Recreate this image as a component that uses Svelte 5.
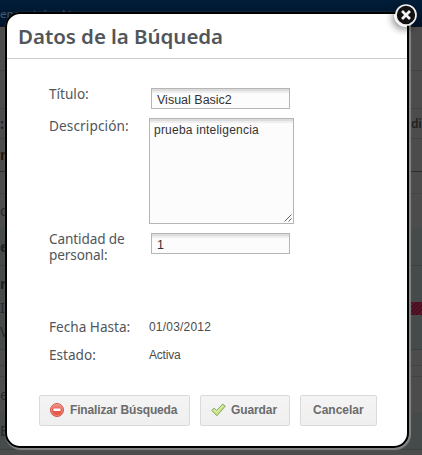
<script>
  let title = $state('Visual Basic2');
  let description = $state('prueba inteligencia');
  let amount = $state('1');

  const rows = [
    { h: 44, line: '#424242' },
    { h: 38, line: '#434343' },
    { h: 30, line: '#434343', left: ':', color: '#17233c', bold: true, right: 'di' },
    { h: 33, line: '#2c2c2c', left: 'm', color: '#2c1608', bold: true },
    { h: 22, line: '#454545' },
    { h: 34, line: '#4a4a4a', left: 'c', color: '#292929' },
    { h: 38, line: '#3c4241', bg: '#444b4a', left: 'e', color: '#1d2222', bold: true },
    { h: 36, line: '#444b4a', bg: '#444b4a', left: 'r', color: '#1d2222', bold: true },
    { h: 13, bg: '#444b4a', left: 'In', color: '#252a30', flag: true },
    { h: 35, line: '#3c4241', bg: '#444b4a', left: 'V', color: '#252a30' },
    { h: 16, line: '#434343' },
    { h: 11, line: '#434343' },
    { h: 36, line: '#4a4a4a', left: 'e', color: '#292929' },
    { h: 37, line: '#3c4241', bg: '#444b4a', left: 'E', color: '#292929' },
    { h: 8 }
  ];
</script>

<div class="page">
  <div class="topbar"><span>encontrás el tuyo</span></div>
  {#each rows as row}
    <div
      class="row"
      class:bold={row.bold}
      style:height="{row.h}px"
      style:background={row.bg}
      style:border-bottom-color={row.line}
      style:color={row.color}
    >
      <span class="edge">{row.left ?? ''}</span>
      {#if row.flag}<i class="flag"></i>{/if}
      {#if row.right}<span class="right">{row.right}</span>{/if}
    </div>
  {/each}

  <section class="dialog">
    <h2>Datos de la Búqueda</h2>
    <form onsubmit={(e) => e.preventDefault()}>
      <div class="field first">
        <label for="title">Título:</label>
        <input id="title" bind:value={title} />
      </div>
      <div class="field desc">
        <label for="description">Descripción:</label>
        <div class="area">
          <textarea id="description" bind:value={description}></textarea>
          <svg class="grip" width="8" height="8" viewBox="0 0 8 8">
            <path d="M.5 7.5l7-7M4.5 7.5l3-3" stroke="#555" stroke-width=".9" fill="none" />
          </svg>
        </div>
      </div>
      <div class="field qty">
        <label for="amount">Cantidad de personal:</label>
        <input id="amount" bind:value={amount} />
      </div>
      <div class="field date"><label for="date">Fecha Hasta:</label><output id="date">01/03/2012</output></div>
      <div class="field state"><label for="state">Estado:</label><output id="state">Activa</output></div>
      <div class="buttons">
        <button class="finish">
          <svg width="14" height="14" viewBox="0 0 14 14">
            <defs>
              <linearGradient id="red" x2="0" y2="1">
                <stop offset="0" stop-color="#f09a8b" />
                <stop offset=".5" stop-color="#e6604f" />
                <stop offset="1" stop-color="#e4503f" />
              </linearGradient>
            </defs>
            <circle cx="7" cy="7" r="6.5" fill="url(#red)" stroke="#d4594c" />
            <circle cx="7" cy="7" r="5.5" fill="none" stroke="#f19a8d" stroke-width=".7" />
            <rect x="3.5" y="5.5" width="7" height="2.6" rx=".5" fill="#fff" />
          </svg>
          <span>Finalizar Búsqueda</span>
        </button>
        <button class="save">
          <svg width="15" height="14" viewBox="0 0 15 14">
            <path d="M.7 7.4L3 5.2l2.7 2.3L11.8 1l2.5 2.2L5.9 12.8z" fill="#c5e57c" stroke="#8aa673" stroke-width="1" />
            <path d="M2.2 7.4L3 6.6l2.8 2.5 6-6.6" fill="none" stroke="#e9f6c4" stroke-width=".9" />
          </svg>
          <span>Guardar</span>
        </button>
        <button class="cancel"><span>Cancelar</span></button>
      </div>
    </form>
  </section>

  <button class="close" aria-label="Cerrar">
    <svg width="24" height="24" viewBox="0 0 24 24">
      <circle cx="12" cy="12" r="10" fill="#111" stroke="#f0f0f0" stroke-width="1.7" />
      <path d="M9 9l6 6M15 9l-6 6" stroke="#f4f4f4" stroke-width="2.7" stroke-linecap="square" />
    </svg>
  </button>
</div>

<style>
  .page {
    position: relative;
    width: 422px;
    height: 455px;
    overflow: hidden;
    background: #4c4c4c;
    font-family: 'Liberation Sans', Arial, sans-serif;
  }
  .topbar {
    box-sizing: border-box;
    height: 27px;
    padding-top: 7px;
    background: linear-gradient(#001d38, #00152b);
    border-bottom: 1px solid #101418;
    color: #48586a;
    font: 11px/13px 'Noto Sans', sans-serif;
    letter-spacing: -0.35px;
    white-space: nowrap;
  }
  .topbar span { font-size: 11.5px; letter-spacing: -0.1px; }
  .row {
    box-sizing: border-box;
    display: flex;
    align-items: center;
    border-bottom: 1px solid transparent;
    font: 14px/14px 'Noto Sans', sans-serif;
  }
  .row.bold { font-weight: 700; }
  .edge { width: 6px; }
  .right {
    margin-left: auto;
    width: 11px;
    font-size: 12px;
    font-weight: 600;
    letter-spacing: -0.3px;
    color: #202020;
  }
  .flag {
    margin-left: auto;
    width: 11px;
    height: 13px;
    background: repeating-linear-gradient(135deg, #4c0f22 0 2px, #591a2d 2px 3px);
  }
  .dialog {
    position: absolute;
    left: 5px;
    top: 12px;
    box-sizing: border-box;
    width: 404px;
    height: 436px;
    border: 2px solid #000;
    border-radius: 15px;
    background: #fff;
    box-shadow: 1px 1px 1px 1px #858585;
  }
  h2 {
    box-sizing: border-box;
    margin: 0;
    height: 45px;
    padding: 8px 0 0 11px;
    border-bottom: 1px solid #ccc;
    color: #50565a;
    font: 600 20.5px/28px 'Noto Sans', sans-serif;
    letter-spacing: -0.05px;
    white-space: nowrap;
  }
  form {
    display: flex;
    flex-direction: column;
    padding-left: 42px;
  }
  .field {
    display: flex;
    align-items: flex-start;
  }
  label {
    box-sizing: border-box;
    width: 100px;
    padding-right: 10px;
    flex: none;
    color: #50565a;
    font: 13.6px/16px 'Noto Sans', sans-serif;
  }
  .desc label { letter-spacing: 0.12px; }
  .qty label { letter-spacing: -0.12px; }
  output {
    color: #4b4b4b;
    font-size: 12px;
    line-height: 16px;
    letter-spacing: 0.2px;
  }
  input, textarea {
    box-sizing: border-box;
    border: 1px solid #b5b5b5;
    border-radius: 0;
    background: linear-gradient(#dcdcdc 0 2px, #eee 2px 4px, #fcfcfc 4px);
    color: #333;
    font: 12.5px/15px 'Liberation Sans', Arial, sans-serif;
    outline: none;
  }
  input {
    width: 139px;
    height: 21px;
    margin: 2px 0 0 2px;
    padding: 2px 5px 0;
  }
  .area {
    position: relative;
    width: 145px;
    height: 106px;
  }
  textarea {
    display: block;
    width: 145px;
    height: 106px;
    margin: 0;
    padding: 4px;
    resize: none;
    font-size: 12px;
    letter-spacing: 0.22px;
    overflow: hidden;
  }
  .grip {
    position: absolute;
    right: 2px;
    bottom: 2px;
  }
  .first { height: 32px; padding-top: 27px; }
  .desc { height: 113px; }
  .qty { height: 88px; }
  .date { height: 28px; }
  .state { height: 48px; }
  .state output { letter-spacing: -0.2px; }
  .buttons {
    display: flex;
    gap: 10px;
    margin-left: -10px;
  }
  .buttons button {
    box-sizing: border-box;
    display: flex;
    align-items: center;
    height: 31px;
    padding: 0 0 0 10px;
    border: 1px solid #dadada;
    border-radius: 2px;
    background: linear-gradient(#f4f4f4, #efefef);
    color: #6b6b6b;
    font: 700 12px/15px 'Liberation Sans', Arial, sans-serif;
    white-space: nowrap;
  }
  .buttons svg { margin-bottom: 2px; }
  .finish { width: 151px; gap: 6px; letter-spacing: -0.15px; }
  .save { width: 90px; gap: 5px; letter-spacing: -0.1px; }
  .buttons .cancel { width: 77px; padding-left: 12px; }
  .close {
    position: absolute;
    left: 394px;
    top: 3px;
    width: 24px;
    height: 24px;
    padding: 0;
    border: 0;
    border-radius: 50%;
    background: none;
    box-shadow: -2px 3px 7px rgba(0, 0, 0, 0.4);
  }
  .close svg { display: block; }
</style>
